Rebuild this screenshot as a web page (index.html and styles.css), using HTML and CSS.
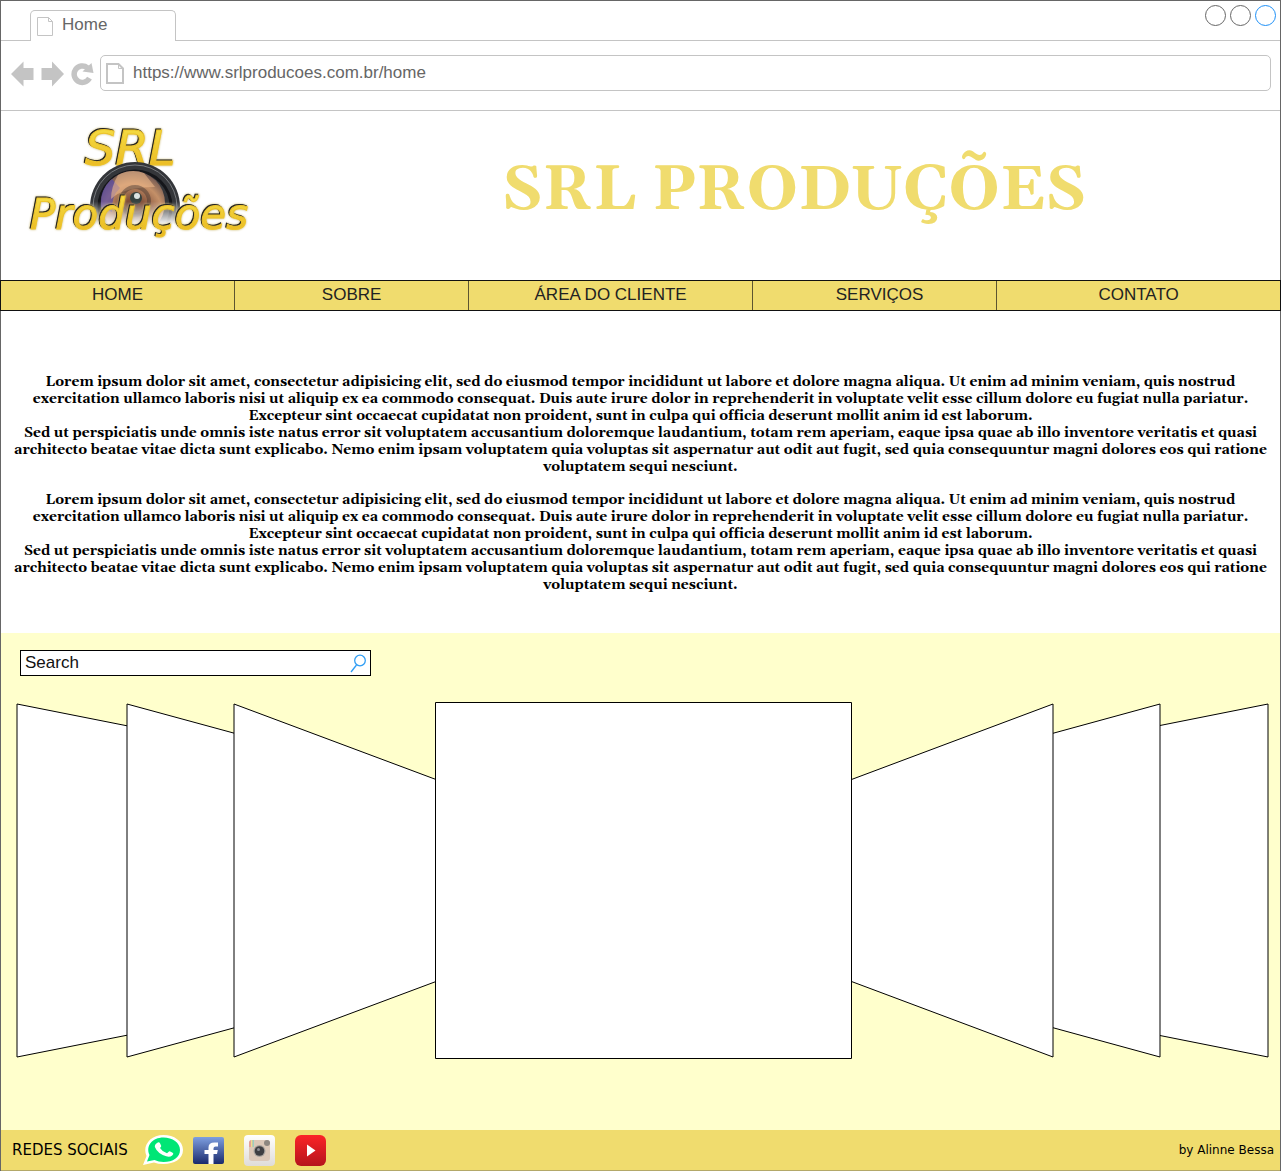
FILE: index.html
```html
<!DOCTYPE html>
<html lang="pt-BR">
<head>
<meta charset="utf-8">
<meta name="viewport" content="width=device-width, initial-scale=1">
<title>Home</title>
<link rel="stylesheet" href="styles.css">
</head>
<body>
<div class="window">
  <div class="tabbar">
    <div class="tab">
      <svg class="tab-icon" width="17" height="20" viewBox="0 0 17 20"><path d="M.5.5h11l4 4v14H.5zM11.5.5v4h4" fill="none" stroke="#c4c4c4"/></svg>
      <span>Home</span>
    </div>
    <div class="controls">
      <button class="control" aria-label="Minimizar"></button>
      <button class="control" aria-label="Maximizar"></button>
      <button class="control control-active" aria-label="Fechar"></button>
    </div>
  </div>
  <div class="toolbar">
    <button class="tool" aria-label="Voltar"><svg width="24" height="26" viewBox="0 0 24 26"><path d="M0 13 12.500 0.500V7H22.500V19H12.500V25.500z" fill="#c4c4c4"/></svg></button>
    <button class="tool" aria-label="Avançar"><svg width="24" height="26" viewBox="0 0 24 26"><path d="M23 13 11 .5V7H.5v12H11v6.500z" fill="#c4c4c4"/></svg></button>
    <button class="tool" aria-label="Recarregar"><svg width="24" height="26" viewBox="0 0 24 26"><path d="M18.500 17.200A8.200 8.200 0 1 1 16.500 6.800" fill="none" stroke="#c4c4c4" stroke-width="5.500"/><path d="M20.500 2 22.500 12 11.500 10.500z" fill="#c4c4c4"/></svg></button>
    <div class="address">
      <svg class="address-icon" width="18" height="21" viewBox="0 0 18 21"><path d="M1 1h11.500l4.500 4.500V20H1z" fill="none" stroke="#c4c4c4" stroke-width="2"/><path d="M12.500 1v4.500H17" fill="none" stroke="#c4c4c4"/></svg>
      <input class="address-input" type="text" aria-label="Endereço" value="https://www.srlproducoes.com.br/home">
    </div>
  </div>
  <header class="header">
    <svg class="logo" width="240" height="134" viewBox="0 -14 240 134" role="img" aria-label="SRL Produções">
      <defs>
        <linearGradient id="gold" x1="0" y1="0" x2="0" y2="1"><stop offset="0" stop-color="#f6e24a"/><stop offset="1" stop-color="#e9b41c"/></linearGradient>
        <radialGradient id="glass" cx=".5" cy=".65" r=".65"><stop offset="0" stop-color="#5a4538"/><stop offset=".3" stop-color="#7d4c37"/><stop offset=".7" stop-color="#c49068"/><stop offset="1" stop-color="#6b5450"/></radialGradient>
        <linearGradient id="fade" x1="0" y1="0" x2="0" y2="1"><stop offset=".45" stop-color="#fff"/><stop offset=".7" stop-color="#fff" stop-opacity="0"/></linearGradient>
        <mask id="lens-mask"><rect x="60" y="34" width="110" height="94" fill="url(#fade)"/></mask>
      </defs>
      <g class="logo-text" fill="url(#gold)"><text class="logo-top" x="64" y="40">SRL</text></g>
      <g mask="url(#lens-mask)">
        <circle cx="114" cy="82" r="45" fill="#34363a"/>
        <circle cx="114" cy="82" r="42" fill="none" stroke="#777a7e"/>
        <circle cx="114" cy="82" r="36" fill="none" stroke="#15161a" stroke-width="3"/>
        <circle cx="112" cy="78" r="32" fill="url(#glass)"/>
        <path d="M80 82a32 32 0 0 1 11-28l8 9q-9 8-8 24z" fill="#5549a8" opacity=".7"/>
        <path d="M97 50Q90 62 90 74 102 62 134 62L123 48Q110 43 97 50z" fill="#efb98a" opacity=".6"/>
        <circle cx="114" cy="76" r="14" fill="none" stroke="#332b2a" stroke-width="4" opacity=".4"/>
        <circle cx="115" cy="73" r="6" fill="#35423f"/>
        <circle cx="116" cy="71" r="3" fill="#dce4e2"/>
      </g>
      <g class="logo-text" fill="url(#gold)"><text class="logo-bottom" x="9" y="104">Produções</text></g>
    </svg>
    <h1 class="title">SRL PRODUÇÕES</h1>
  </header>
  <nav class="nav">
    <a class="nav-link" href="#home">HOME</a>
    <a class="nav-link" href="#sobre">SOBRE</a>
    <a class="nav-link nav-client" href="#cliente">ÁREA DO CLIENTE</a>
    <a class="nav-link nav-services" href="#servicos">SERVIÇOS</a>
    <a class="nav-link nav-contact" href="#contato">CONTATO</a>
  </nav>
  <main>
    <section class="intro">
      <p>Lorem ipsum dolor sit amet, consectetur adipisicing elit, sed do eiusmod tempor incididunt ut labore et dolore magna aliqua. Ut enim ad minim veniam, quis nostrud exercitation ullamco laboris nisi ut aliquip ex ea commodo consequat. Duis aute irure dolor in reprehenderit in voluptate velit esse cillum dolore eu fugiat nulla pariatur. Excepteur sint occaecat cupidatat non proident, sunt in culpa qui officia deserunt mollit anim id est laborum.<br>Sed ut perspiciatis unde omnis iste natus error sit voluptatem accusantium doloremque laudantium, totam rem aperiam, eaque ipsa quae ab illo inventore veritatis et quasi architecto beatae vitae dicta sunt explicabo. Nemo enim ipsam voluptatem quia voluptas sit aspernatur aut odit aut fugit, sed quia consequuntur magni dolores eos qui ratione voluptatem sequi nesciunt.</p>
      <p>Lorem ipsum dolor sit amet, consectetur adipisicing elit, sed do eiusmod tempor incididunt ut labore et dolore magna aliqua. Ut enim ad minim veniam, quis nostrud exercitation ullamco laboris nisi ut aliquip ex ea commodo consequat. Duis aute irure dolor in reprehenderit in voluptate velit esse cillum dolore eu fugiat nulla pariatur. Excepteur sint occaecat cupidatat non proident, sunt in culpa qui officia deserunt mollit anim id est laborum.<br>Sed ut perspiciatis unde omnis iste natus error sit voluptatem accusantium doloremque laudantium, totam rem aperiam, eaque ipsa quae ab illo inventore veritatis et quasi architecto beatae vitae dicta sunt explicabo. Nemo enim ipsam voluptatem quia voluptas sit aspernatur aut odit aut fugit, sed quia consequuntur magni dolores eos qui ratione voluptatem sequi nesciunt.</p>
    </section>
    <section class="gallery">
      <form class="search">
        <input class="search-input" type="text" aria-label="Search" value="Search">
        <button class="search-button" type="button" aria-label="Buscar"><svg width="17" height="19" viewBox="0 0 17 19"><g fill="none" stroke="#2f9df4" stroke-width="1.300"><circle cx="10" cy="6.500" r="5.300"/><path d="M6.500 11 1 18"/></g></svg></button>
      </form>
      <svg class="carousel" viewBox="0 0 1253 358" role="img" aria-label="Galeria">
        <g fill="#fff" stroke="#000">
          <path d="M0 2 202 42V315L0 355z"/>
          <path d="M110 2 312 57V300L110 355z"/>
          <path d="M217 2 419 77.500V279.500L217 355z"/>
          <path d="M1251 2 1050 42V315L1251 355z"/>
          <path d="M1143 2 942 57V300L1143 355z"/>
          <path d="M1036 2 834.500 77.500V279.500L1036 355z"/>
          <path d="M418.500 .5H834.500V356.500H418.500z"/>
        </g>
      </svg>
    </section>
  </main>
  <footer class="footer">
    <span class="social-label">REDES SOCIAIS</span>
    <div class="social">
      <a href="#whatsapp" aria-label="WhatsApp"><svg width="40" height="31" viewBox="0 0 40 31"><path d="M0 30 3.500 21C-1 11 7 0 20.500 0 31 0 40 6 40 15S31 29 20.500 29Q15 29 11 27.500z" fill="#fff"/><path d="M4 26.500 6.500 20C2.500 11 9 2.500 20.500 2.500c9 0 16.500 5 16.500 12.500s-7 12-16.500 12q-5 0-9-2z" fill="#00e676"/><path d="M14 8q2-1.500 3 .3l1.200 2.400q.3 1-1.200 2.200 2.500 4 7 5.300l2-1.800q.8-.5 4 1.600 1 .8-.8 2.500-2.500 2-6 .8-8.500-2.500-11.200-9Q11.200 10 14 8z" fill="#fff"/></svg></a>
      <a href="#facebook" aria-label="Facebook"><svg width="31" height="27" viewBox="0 0 31 27"><defs><linearGradient id="fb" x1="0" y1="0" x2="0" y2="1"><stop offset="0" stop-color="#7e9fe0"/><stop offset="1" stop-color="#1a2a6c"/></linearGradient></defs><rect width="31" height="27" rx="2" fill="url(#fb)"/><path d="M15.500 27V17H11.500v-4h4v-2.500q0-5 6-5H25v4h-2.500q-2 0-2 2V13h4.300l-.8 4h-3.500v10z" fill="#fff"/></svg></a>
      <a href="#instagram" aria-label="Instagram"><svg width="31" height="31" viewBox="0 0 31 31"><defs><linearGradient id="ig" x1="0" y1="0" x2="0" y2="1"><stop offset="0" stop-color="#fff"/><stop offset="1" stop-color="#dfdcd8"/></linearGradient></defs><rect width="31" height="31" rx="4" fill="url(#ig)"/><rect x="5" y="5" width="21" height="21" rx="3" fill="#dcc8b8"/><path d="M5 12h5V5H8Q5 5 5 8z" fill="#e5a09a"/><path d="M7 12V5h1.500v7z" fill="#eedc8e"/><path d="M8.500 12V5H10v7z" fill="#9ccfc0"/><circle cx="23" cy="8" r="3" fill="#8e8780"/><circle cx="15.500" cy="16" r="6" fill="#aaa49e"/><circle cx="15.500" cy="16" r="4.800" fill="#3e3e42"/><circle cx="14.500" cy="14.500" r="1.500" fill="#8b8d93"/></svg></a>
      <a href="#youtube" aria-label="YouTube"><svg width="31" height="31" viewBox="0 0 31 31"><defs><linearGradient id="yt" x1="0" y1="0" x2="0" y2="1"><stop offset="0" stop-color="#fb2427"/><stop offset="1" stop-color="#b5141c"/></linearGradient></defs><rect width="31" height="31" rx="6" fill="url(#yt)"/><path d="M12 9.500 20.500 15.500 12 21.500z" fill="#fff"/></svg></a>
    </div>
    <span class="credit">by Alinne Bessa</span>
  </footer>
</div>
</body>
</html>
```
FILE: styles.css
```css
* { box-sizing: border-box; }
body {
  margin: 0;
  background: #fff;
  color: #000;
  font-family: "Liberation Sans", Arial, sans-serif;
  font-size: 17px;
}
svg { display: block; }
button { padding: 0; border: 0; background: none; }

.window { border: 1px solid #666; border-bottom: 0; }

.tabbar {
  display: flex;
  justify-content: space-between;
  height: 40px;
  padding: 9px 4px 0 29px;
  border-bottom: 1px solid #c4c4c4;
}
.tab {
  display: flex;
  gap: 8px;
  width: 146px;
  height: 31px;
  padding: 5px 6px 0;
  border: 1px solid #c4c4c4;
  border-bottom: 0;
  border-radius: 5px 5px 0 0;
  background: #fff;
  color: #666;
  line-height: 18px;
}
.tab-icon { margin-top: 1px; }
.controls { display: flex; gap: 4px; margin-top: -5px; }
.control {
  width: 21px;
  height: 21px;
  border: 1px solid #666;
  border-radius: 50%;
}
.control-active { border-color: #1e90f7; }

.toolbar {
  display: flex;
  align-items: center;
  gap: 6px;
  height: 70px;
  padding: 0 9px 5px 10px;
  border-bottom: 1px solid #c4c4c4;
}
.tool { margin-top: 2px; }
.address {
  display: flex;
  align-items: center;
  flex: 1;
  gap: 9px;
  height: 36px;
  margin-left: -1px;
  padding: 0 5px;
  border: 1px solid #c4c4c4;
  border-radius: 5px;
}
.address-input {
  flex: 1;
  height: 34px;
  padding: 0;
  border: 0;
  background: none;
  color: #666;
  font: inherit;
}

.header {
  display: flex;
  align-items: flex-start;
  height: 169px;
  padding: 0 20px;
}
.logo-text {
  font-family: "DejaVu Sans", sans-serif;
  font-style: italic;
  stroke: #eec52c;
  filter: drop-shadow(-1px -1px 0 #222) drop-shadow(0 0 1px #c9b66a);
}
.logo-top { font-size: 48px; }
.logo-bottom { font-size: 42px; }
.title {
  flex: 1;
  margin: 41px 0 0 67px;
  color: #f0dc6e;
  font-family: Georgia, Gelasio, "Liberation Serif", serif;
  font-size: 63px;
  line-height: 78px;
  text-align: center;
}

.nav {
  display: flex;
  height: 31px;
  margin: 0 -1px;
  border: 1px solid #111;
  background: #f0dc6e;
}
.nav-link {
  flex: 234 1 0;
  border-right: 1px solid #5d5530;
  color: #222;
  line-height: 28px;
  text-align: center;
  text-decoration: none;
}
.nav-client { flex-grow: 284; }
.nav-services { flex-grow: 234; padding-left: 10px; }
.nav-contact { flex-grow: 284; border-right: 0; }

.intro {
  padding: 63px 10px 39px;
  font-family: Georgia, Gelasio, "Liberation Serif", serif;
  font-size: 14px;
  font-weight: bold;
  font-variant-ligatures: none;
  line-height: 17px;
  text-align: center;
}
.intro p { margin: 0 0 16px; }
.intro p:last-child { margin: 0; }

.gallery { padding: 17px 10px 70px 16px; background: #ffffcc; }
.search {
  display: flex;
  align-items: center;
  width: 351px;
  max-width: 100%;
  height: 26px;
  margin: 0 0 26px 3px;
  padding: 0 3px 0 4px;
  border: 1px solid #000;
  background: #fff;
}
.search-input {
  flex: 1;
  min-width: 0;
  height: 24px;
  padding: 0;
  border: 0;
  background: none;
  color: #111;
  font: inherit;
}
.carousel { width: 100%; height: auto; overflow: visible; }

.footer {
  display: flex;
  align-items: center;
  height: 41px;
  padding: 0 6px 0 11px;
  border-bottom: 1px solid #b3a869;
  background: #f0dc6e;
  font-family: Verdana, "DejaVu Sans", sans-serif;
  font-size: 15px;
}
.social { display: flex; align-items: center; margin-left: 15px; gap: 20px; }
.social a:first-child { margin-right: -10px; }
.credit { margin-left: auto; font-size: 12px; }
```
